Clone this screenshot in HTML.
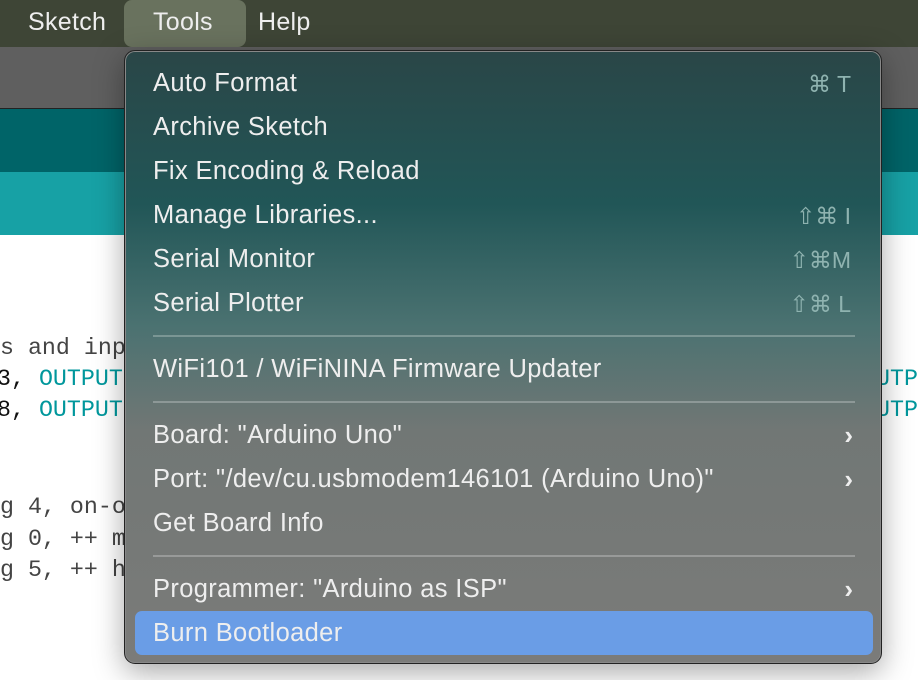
<!DOCTYPE html>
<html><head><style>
body{margin:0;width:918px;height:680px;overflow:hidden;position:relative;background:#fff;font-family:"Liberation Sans",sans-serif}
.bar{position:absolute;left:0;top:0;width:918px;height:47px;background:#3e4536}
.bar span{position:absolute;top:8px;font-size:25px;color:#eee;letter-spacing:0.3px}
.sel{position:absolute;left:124px;top:0;width:122px;height:47px;background:#69725e;border-radius:8px}
.code{position:absolute;font-family:"Liberation Mono",monospace;font-size:23.3px;color:#444;white-space:pre}
.t{color:#00979c}
.menu{position:absolute;left:124px;top:50px;width:756px;height:612px;border-radius:11px;border:1px solid #222;box-shadow:0 0 0 1px #888 inset,0 8px 30px rgba(0,0,0,.35);background:linear-gradient(#2a4647 0%,#215657 25%,#4b7271 45%,#717775 62%,#7b7b79 100%)}
.it{position:absolute;left:28px;font-size:25.5px;color:#eee;line-height:30px;letter-spacing:0.35px}
.sc{position:absolute;right:30px;font-size:23px;color:#8fb3b0;line-height:30px}
.sep{position:absolute;left:28px;width:702px;height:2px;background:rgba(255,255,255,.25)}
.ch{position:absolute;right:28px;font-size:26px;color:#eee;line-height:30px;font-weight:bold}
</style></head><body>
<div style="position:absolute;left:0;top:47px;width:918px;height:61px;background:#5f5f5f;border-bottom:1px solid #222"></div>
<div style="position:absolute;left:0;top:109px;width:918px;height:63px;background:#006468"></div>
<div style="position:absolute;left:0;top:172px;width:918px;height:63px;background:#17a1a5"></div>
<div class="bar"><div class="sel"></div><span style="left:28px">Sketch</span><span style="left:153px">Tools</span><span style="left:258px">Help</span></div>
<div class="code" style="left:-14px;top:335px">rs and inp</div>
<div class="code" style="left:-3px;top:366px;color:#111">3, <span class="t">OUTPUT</span></div>
<div class="code" style="left:-3px;top:397px;color:#111">8, <span class="t">OUTPUT</span></div>
<div class="code" style="left:-14px;top:494px">ng 4, on-o</div>
<div class="code" style="left:-14px;top:526px">ng 0, ++ m</div>
<div class="code" style="left:-14px;top:557px">ng 5, ++ h</div>
<div class="code t" style="left:876px;top:366px">UTPUT</div>
<div class="code t" style="left:876px;top:397px">UTPUT</div>
<div class="menu">
<div class="it" style="top:17px">Auto Format</div><div class="sc" style="top:18px">⌘ T</div>
<div class="it" style="top:61px">Archive Sketch</div>
<div class="it" style="top:105px">Fix Encoding &amp; Reload</div>
<div class="it" style="top:149px">Manage Libraries...</div><div class="sc" style="top:150px">⇧⌘ I</div>
<div class="it" style="top:193px">Serial Monitor</div><div class="sc" style="top:194px">⇧⌘M</div>
<div class="it" style="top:237px">Serial Plotter</div><div class="sc" style="top:238px">⇧⌘ L</div>
<div class="sep" style="top:284px"></div>
<div class="it" style="top:303px">WiFi101 / WiFiNINA Firmware Updater</div>
<div class="sep" style="top:350px"></div>
<div class="it" style="top:369px">Board: "Arduino Uno"</div><div class="ch" style="top:369px">›</div>
<div class="it" style="top:413px">Port: "/dev/cu.usbmodem146101 (Arduino Uno)"</div><div class="ch" style="top:413px">›</div>
<div class="it" style="top:457px">Get Board Info</div>
<div class="sep" style="top:504px"></div>
<div class="it" style="top:523px">Programmer: "Arduino as ISP"</div><div class="ch" style="top:523px">›</div>
<div style="position:absolute;left:10px;top:560px;width:738px;height:44px;background:#6a9de6;border-radius:7px"></div>
<div class="it" style="top:567px">Burn Bootloader</div>
</div>
</body></html>
